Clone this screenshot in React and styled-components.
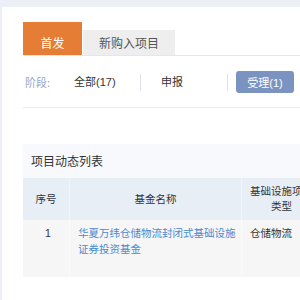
import React from "react";
import styled, { createGlobalStyle } from "styled-components";

const GlobalStyle = createGlobalStyle`
  html, body {
    margin: 0;
    padding: 0;
    overflow: hidden;
    background: #eceff5;
  }
  body {
    font-family: "Liberation Sans", "Noto Sans CJK SC", sans-serif;
  }
`;

const Page = styled.div`
  padding: 7px 0 0 2px;
  min-height: 300px;
  box-sizing: border-box;
`;

const Panel = styled.div`
  background: #fff;
  width: 420px;
  min-height: 293px;
  padding: 15px 0 0 21px;
  box-sizing: border-box;
`;

const TabBar = styled.div`
  display: flex;
  align-items: flex-end;
  border-bottom: 1px solid #e4e6ea;
`;

const Tab = styled.div`
  height: 25px;
  line-height: 25px;
  padding: ${p => (p.active ? "8px 16px 0" : "0 16px")};
  min-width: ${p => (p.active ? "27px" : "60px")};
  text-align: center;
  font-family: "Noto Sans CJK SC", sans-serif;
  font-size: 12px;
  background: ${p => (p.active ? "#e67d34" : "#eeeeee")};
  color: ${p => (p.active ? "#fff" : "#555")};
  margin-right: 1px;
`;

const StageRow = styled.div`
  display: flex;
  align-items: center;
  padding: 15px 0 14px;
  border-bottom: 1px solid #e8ecf2;
  font-size: 11px;
`;

const StageLabel = styled.div`
  width: 29px;
  padding-left: 2px;
  color: #9aa7c6;
  font-family: "Noto Sans CJK SC", sans-serif;
`;

const StageItem = styled.div`
  width: 66px;
  padding-left: 20px;
  height: 17px;
  line-height: 17px;
  color: #333;
  border-right: 1px solid #dfe2e6;
`;

const StageButton = styled.div`
  margin-left: 8px;
  width: 58px;
  height: 22px;
  border-radius: 3px;
  background: #7b93c1;
  color: #fff;
  display: flex;
  align-items: center;
  justify-content: center;
`;

const ListPanel = styled.div`
  margin-top: 36px;
  background: #f7f9fc;
`;

const ListTitle = styled.div`
  height: 34px;
  line-height: 34px;
  padding-left: 8px;
  font-family: "Noto Sans CJK SC", sans-serif;
  font-size: 12px;
  color: #333;
`;

const Row = styled.div`
  display: grid;
  grid-template-columns: 47px 172px 80px 1fr;
  height: ${p => (p.head ? "42px" : "57px")};
  background: ${p => (p.head ? "#e8eef6" : "#f6f6f7")};
  font-size: 10.5px;
  color: #333;
`;

const Cell = styled.div`
  display: flex;
  justify-content: ${p => (p.left ? "flex-start" : "center")};
  align-items: ${p => (p.head ? "center" : "flex-start")};
  text-align: ${p => (p.left ? "left" : "center")};
  padding: ${p => (p.head ? "0 8px" : "5px 4px 0 8px")};
  line-height: ${p => (p.head ? "15px" : "16px")};
  border-right: 1px solid ${p => (p.head ? "#f1f4f8" : "#fafafa")};
  box-sizing: border-box;
`;

const FundLink = styled.span`
  color: #4a8ad0;
`;

export default function App() {
  return (
    <Page>
      <GlobalStyle />
      <Panel>
        <TabBar>
          <Tab active>首发</Tab>
          <Tab>新购入项目</Tab>
        </TabBar>
        <StageRow>
          <StageLabel>阶段:</StageLabel>
          <StageItem>全部(17)</StageItem>
          <StageItem>申报</StageItem>
          <StageButton>受理(1)</StageButton>
        </StageRow>
        <ListPanel>
          <ListTitle>项目动态列表</ListTitle>
          <Row head>
            <Cell head>序号</Cell>
            <Cell head>基金名称</Cell>
            <Cell head>基础设施项目类型</Cell>
            <Cell head />
          </Row>
          <Row>
            <Cell>1</Cell>
            <Cell left>
              <FundLink>华夏万纬仓储物流封闭式基础设施证券投资基金</FundLink>
            </Cell>
            <Cell left>仓储物流</Cell>
            <Cell />
          </Row>
        </ListPanel>
      </Panel>
    </Page>
  );
}
